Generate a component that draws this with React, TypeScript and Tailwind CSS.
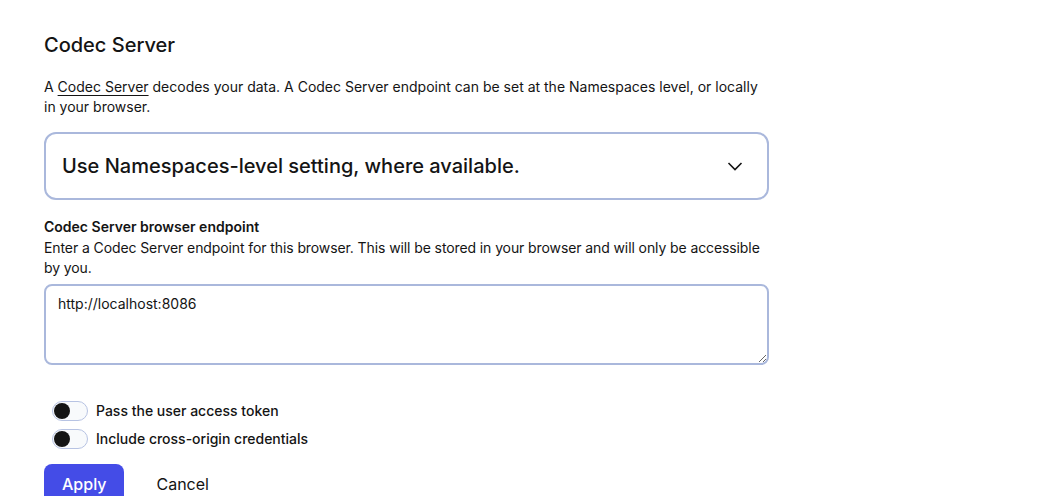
import { useState } from "react";

const Toggle = ({ label }: { label: string }) => {
  const [on, setOn] = useState(false);
  return (
    <label className="flex h-5 items-center gap-2 cursor-pointer">
      <button
        type="button"
        onClick={() => setOn(!on)}
        className={`relative h-5 w-9 rounded-full border border-[#b7c3e3] ${
          on ? "bg-[#444ce7]" : "bg-[#f8fafc]"
        }`}
      >
        <span
          className={`absolute top-[1px] h-4 w-4 rounded-full bg-[#141414] ${
            on ? "left-[17px]" : "left-[1px]"
          }`}
        />
      </button>
      <span className="text-[14px] font-medium leading-5 text-[#141414]">{label}</span>
    </label>
  );
};

export default function App() {
  return (
    <div
      className="min-h-screen bg-white text-[#141414]"
      style={{ fontFamily: "Inter, 'Noto Sans', sans-serif" }}
    >
      <div className="ml-[44px] w-[725px] pt-[31px]">
        <h1 className="text-[20px] font-medium leading-7">Codec Server</h1>

        <p className="mt-[18px] text-[14px] leading-5">
          A <a className="underline underline-offset-[3px]">Codec Server</a> decodes your data. A
          Codec Server endpoint can be set at the Namespaces level, or locally in your browser.
        </p>

        {/* select */}
        <div className="mt-[15px] flex h-[68px] items-center justify-between rounded-xl border-2 border-[#aab8dc] pl-4 pr-[24px]">
          <span className="text-[20px] font-medium">
            Use Namespaces-level setting, where available.
          </span>
          <svg width="16" height="16" viewBox="0 0 16 16" fill="none">
            <path d="M1.5 5l6.5 6.5L14.5 5" stroke="#141414" strokeWidth="1.6" />
          </svg>
        </div>

        {/* endpoint */}
        <div className="mt-[17px]">
          <h2 className="text-[14px] font-semibold leading-5">Codec Server browser endpoint</h2>
          <p className="mt-[1px] text-[14px] leading-5 tracking-[-0.1px]">
            Enter a Codec Server endpoint for this browser. This will be stored in your browser and
            will only be accessible by you.
          </p>
          <textarea
            defaultValue="http://localhost:8086"
            className="mt-[6px] block h-[81px] w-full rounded-lg border-2 border-[#aab8dc] px-3 py-2 text-[14px] leading-5 outline-none"
          />
        </div>

        <div className="mt-[36px] ml-2 flex flex-col gap-2">
          <Toggle label="Pass the user access token" />
          <Toggle label="Include cross-origin credentials" />
        </div>

        <div className="mt-[15px] flex items-start gap-[32px]">
          <button className="h-[40px] rounded-lg bg-[#444ce7] px-[18px] text-[16px] font-medium text-white">
            Apply
          </button>
          <button className="h-[40px] text-[16px] text-[#141414]">Cancel</button>
        </div>
      </div>
    </div>
  );
}
